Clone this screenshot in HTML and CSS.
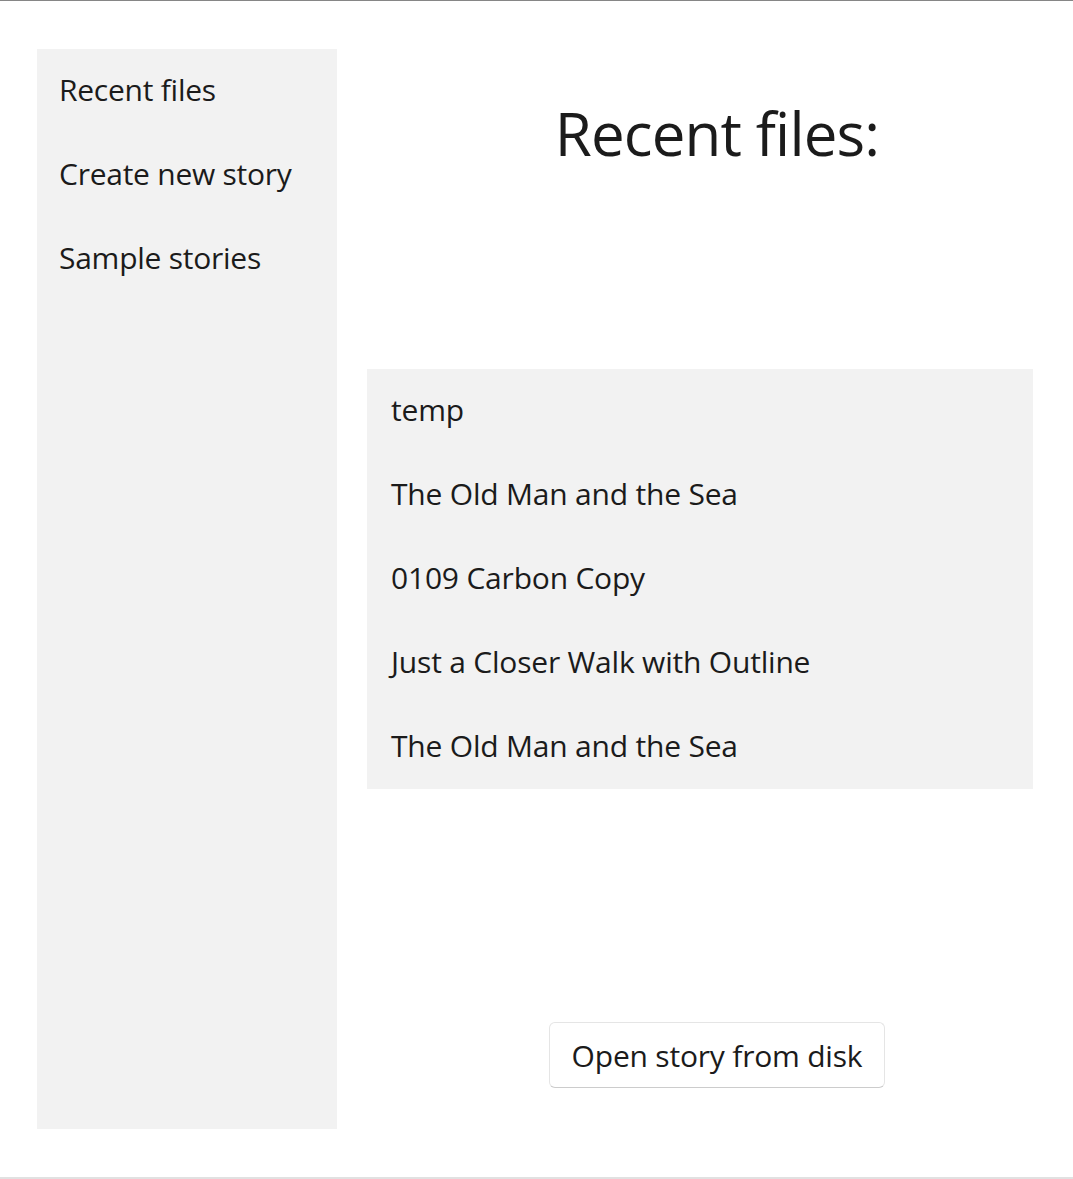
FILE: index.html
```html
<!DOCTYPE html>
<html lang="en">
<head>
<meta charset="utf-8">
<title>Recent files</title>
<link rel="stylesheet" href="styles.css">
</head>
<body>
<div class="window">
  <nav class="sidebar">
    <div class="nav-item">Recent files</div>
    <div class="nav-item">Create new story</div>
    <div class="nav-item">Sample stories</div>
  </nav>
  <main class="content">
    <h1 class="title">Recent files:</h1>
    <ul class="recent-list">
      <li class="recent-item">temp</li>
      <li class="recent-item">The Old Man and the Sea</li>
      <li class="recent-item">0109 Carbon Copy</li>
      <li class="recent-item">Just a Closer Walk with Outline</li>
      <li class="recent-item">The Old Man and the Sea</li>
    </ul>
    <div class="actions">
      <button class="open-button" type="button">Open story from disk</button>
    </div>
  </main>
</div>
</body>
</html>
```
FILE: styles.css
```css
* { box-sizing: border-box; }

html, body {
  margin: 0;
  padding: 0;
  background: #ffffff;
}

body {
  font-family: "Open Sans", "Noto Sans", sans-serif;
  color: #1b1b1b;
}

.window {
  height: 1179px;
  border-top: 1px solid #868686;
  border-bottom: 2px solid #e1e1e1;
  padding: 48px 6px 48px 37px;
  display: grid;
  grid-template-columns: 300px 1fr;
  column-gap: 30px;
}

.sidebar {
  background: #f2f2f2;
  display: flex;
  flex-direction: column;
  padding-left: 22px;
}

.nav-item {
  height: 84px;
  line-height: 82px;
  font-size: 30px;
  letter-spacing: -0.25px;
  white-space: nowrap;
}

.content {
  display: flex;
  flex-direction: column;
  align-items: stretch;
  padding-bottom: 41px;
}

.title {
  margin: 44px 0 0 0;
  font-size: 60px;
  line-height: 80px;
  font-weight: 400;
  letter-spacing: -0.85px;
  text-align: center;
}

.recent-list {
  list-style: none;
  margin: 196px 34px 0 0;
  padding: 0;
  background: #f2f2f2;
}

.recent-item {
  height: 84px;
  line-height: 82px;
  font-size: 30px;
  letter-spacing: -0.2px;
  padding-left: 24px;
  white-space: nowrap;
}

.actions {
  margin-top: auto;
  display: flex;
  justify-content: center;
}

.open-button {
  height: 66px;
  padding: 0 22px;
  font-family: inherit;
  font-size: 30px;
  letter-spacing: -0.2px;
  color: #1b1b1b;
  background: #ffffff;
  border: 1px solid #e5e5e5;
  border-bottom-color: #cccccc;
  border-radius: 6px;
}
```
